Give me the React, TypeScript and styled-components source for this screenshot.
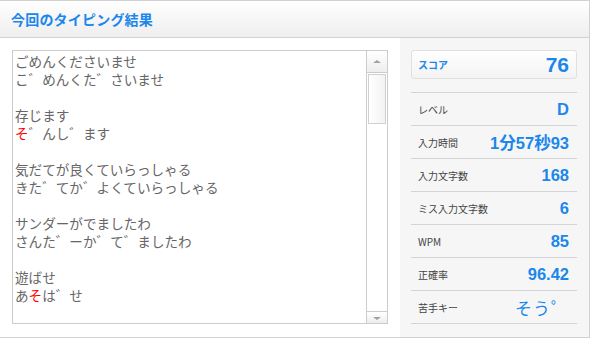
import React from "react";
import styled, { createGlobalStyle } from "styled-components";

const GlobalStyle = createGlobalStyle`
  html, body {
    margin: 0;
    padding: 0;
    background: #ffffff;
    font-family: "Liberation Sans", "Noto Sans CJK JP", sans-serif;
  }
`;

const Wrapper = styled.div`
  width: 589px;
  height: 336px;
  border-top: 1px solid #d2d2d2;
  border-right: 1px solid #d2d2d2;
  border-bottom: 1px solid #d2d2d2;
  display: flex;
  flex-direction: column;
  overflow: hidden;
`;

const Header = styled.div`
  height: 36px;
  flex-shrink: 0;
  background: linear-gradient(#ffffff, #eeeeee);
  border-bottom: 1px solid #d2d2d2;
  display: flex;
  align-items: center;
  padding-left: 11px;
`;

const Title = styled.h1`
  margin: 0;
  font-family: "Noto Sans CJK JP", sans-serif;
  font-size: 14px;
  font-weight: 700;
  color: #1b87ec;
  letter-spacing: 0.2px;
`;

const Body = styled.div`
  flex: 1;
  display: flex;
  gap: 12px;
  padding-left: 12px;
`;

const TextBox = styled.div`
  margin-top: 12px;
  width: 374px;
  height: 272px;
  border: 1px solid #cccccc;
  display: flex;
  overflow: hidden;
  background: #ffffff;
`;

const TextArea = styled.div`
  flex: 1;
  padding: 1px 2px;
  font-family: "Noto Sans CJK JP", monospace;
  font-size: 13.6px;
  line-height: 18px;
  color: #666666;
  white-space: pre;
  overflow: hidden;
`;

const Line = styled.div`
  height: 18px;
`;

const Miss = styled.span`
  display: inline-block;
  height: 18px;
  line-height: 18px;
  vertical-align: top;
  color: #ff0000;
`;

const ScrollBar = styled.div`
  width: 20px;
  border-left: 1px solid #cccccc;
  display: flex;
  flex-direction: column;
  background: #ffffff;
`;

const ScrollButton = styled.div<{ $h: number; $down?: boolean }>`
  height: ${(p) => p.$h}px;
  background: linear-gradient(#ffffff, #eeeeee);
  border-top: ${(p) => (p.$down ? "1px solid #cccccc" : "none")};
  border-bottom: ${(p) => (p.$down ? "none" : "1px solid #cccccc")};
  display: flex;
  align-items: center;
  justify-content: center;
  flex-shrink: 0;
`;

const Arrow = styled.div<{ $down?: boolean }>`
  width: 0;
  height: 0;
  border-left: 4px solid transparent;
  border-right: 4px solid transparent;
  ${(p) =>
    p.$down
      ? "border-top: 3px solid #a0a0a0; margin-top: 2px;"
      : "border-bottom: 3px solid #a0a0a0;"}
`;

const Track = styled.div`
  flex: 1;
  padding: 1px 1px;
`;

const Thumb = styled.div`
  height: 48px;
  border: 1px solid #d0d0d0;
  background: linear-gradient(to right, #ffffff, #f2f2f2);
`;

const Panel = styled.div`
  flex: 1;
  background: #f6f6f6;
  padding: 12px 12px 0 11px;
  display: flex;
  flex-direction: column;
`;

const ScoreBox = styled.div`
  height: 27px;
  border: 1px solid #e0e0e0;
  border-radius: 3px;
  background: linear-gradient(#ffffff, #f3f3f3);
  display: flex;
  align-items: center;
  justify-content: space-between;
  padding: 0 7px 0 6px;
  margin-bottom: 13px;
`;

const ScoreLabel = styled.span`
  font-family: "Noto Sans CJK JP", sans-serif;
  font-size: 10px;
  font-weight: 700;
  color: #1b87ec;
`;

const ScoreValue = styled.span`
  font-family: "Liberation Sans", sans-serif;
  font-size: 21px;
  font-weight: 700;
  color: #1b87ec;
`;

const Row = styled.div`
  height: 32px;
  border-top: 1px solid #d4d4d4;
  display: flex;
  align-items: center;
  justify-content: space-between;
  padding: 0 8px 0 7px;
  &:last-child {
    border-bottom: 1px solid #d4d4d4;
  }
`;

const Label = styled.span`
  font-family: "Noto Sans CJK JP", sans-serif;
  font-size: 10px;
  color: #444444;
`;

const Value = styled.span<{ $kana?: boolean }>`
  font-family: ${(p) =>
    p.$kana ? '"Noto Sans CJK JP", sans-serif' : '"Liberation Sans", "Noto Sans CJK JP", sans-serif'};
  font-size: ${(p) => (p.$kana ? "17px" : "16.5px")};
  font-weight: ${(p) => (p.$kana ? 400 : 700)};
  color: #1b87ec;
  letter-spacing: ${(p) => (p.$kana ? "1px" : "0")};
`;

const stats = [
  { label: "レベル", value: "D" },
  { label: "入力時間", value: "1分57秒93" },
  { label: "入力文字数", value: "168" },
  { label: "ミス入力文字数", value: "6" },
  { label: "WPM", value: "85" },
  { label: "正確率", value: "96.42" },
  { label: "苦手キー", value: "そう゜", kana: true },
];

function App() {
  return (
    <>
      <GlobalStyle />
      <Wrapper>
        <Header>
          <Title>今回のタイピング結果</Title>
        </Header>
        <Body>
          <TextBox>
            <TextArea>
              <Line>ごめんくださいませ</Line>
              <Line>こ゛めんくた゛さいませ</Line>
              <Line />
              <Line>存じます</Line>
              <Line>
                <Miss>そ</Miss>゛んし゛ます
              </Line>
              <Line />
              <Line>気だてが良くていらっしゃる</Line>
              <Line>きた゛てか゛よくていらっしゃる</Line>
              <Line />
              <Line>サンダーがでましたわ</Line>
              <Line>さんた゛ーか゛て゛ましたわ</Line>
              <Line />
              <Line>遊ばせ</Line>
              <Line>
                あ<Miss>そ</Miss>は゛せ
              </Line>
            </TextArea>
            <ScrollBar>
              <ScrollButton $h={21}>
                <Arrow />
              </ScrollButton>
              <Track>
                <Thumb />
              </Track>
              <ScrollButton $h={11} $down>
                <Arrow $down />
              </ScrollButton>
            </ScrollBar>
          </TextBox>
          <Panel>
            <ScoreBox>
              <ScoreLabel>スコア</ScoreLabel>
              <ScoreValue>76</ScoreValue>
            </ScoreBox>
            {stats.map((s) => (
              <Row key={s.label}>
                <Label>{s.label}</Label>
                <Value $kana={s.kana}>{s.value}</Value>
              </Row>
            ))}
          </Panel>
        </Body>
      </Wrapper>
    </>
  );
}

export default App;
